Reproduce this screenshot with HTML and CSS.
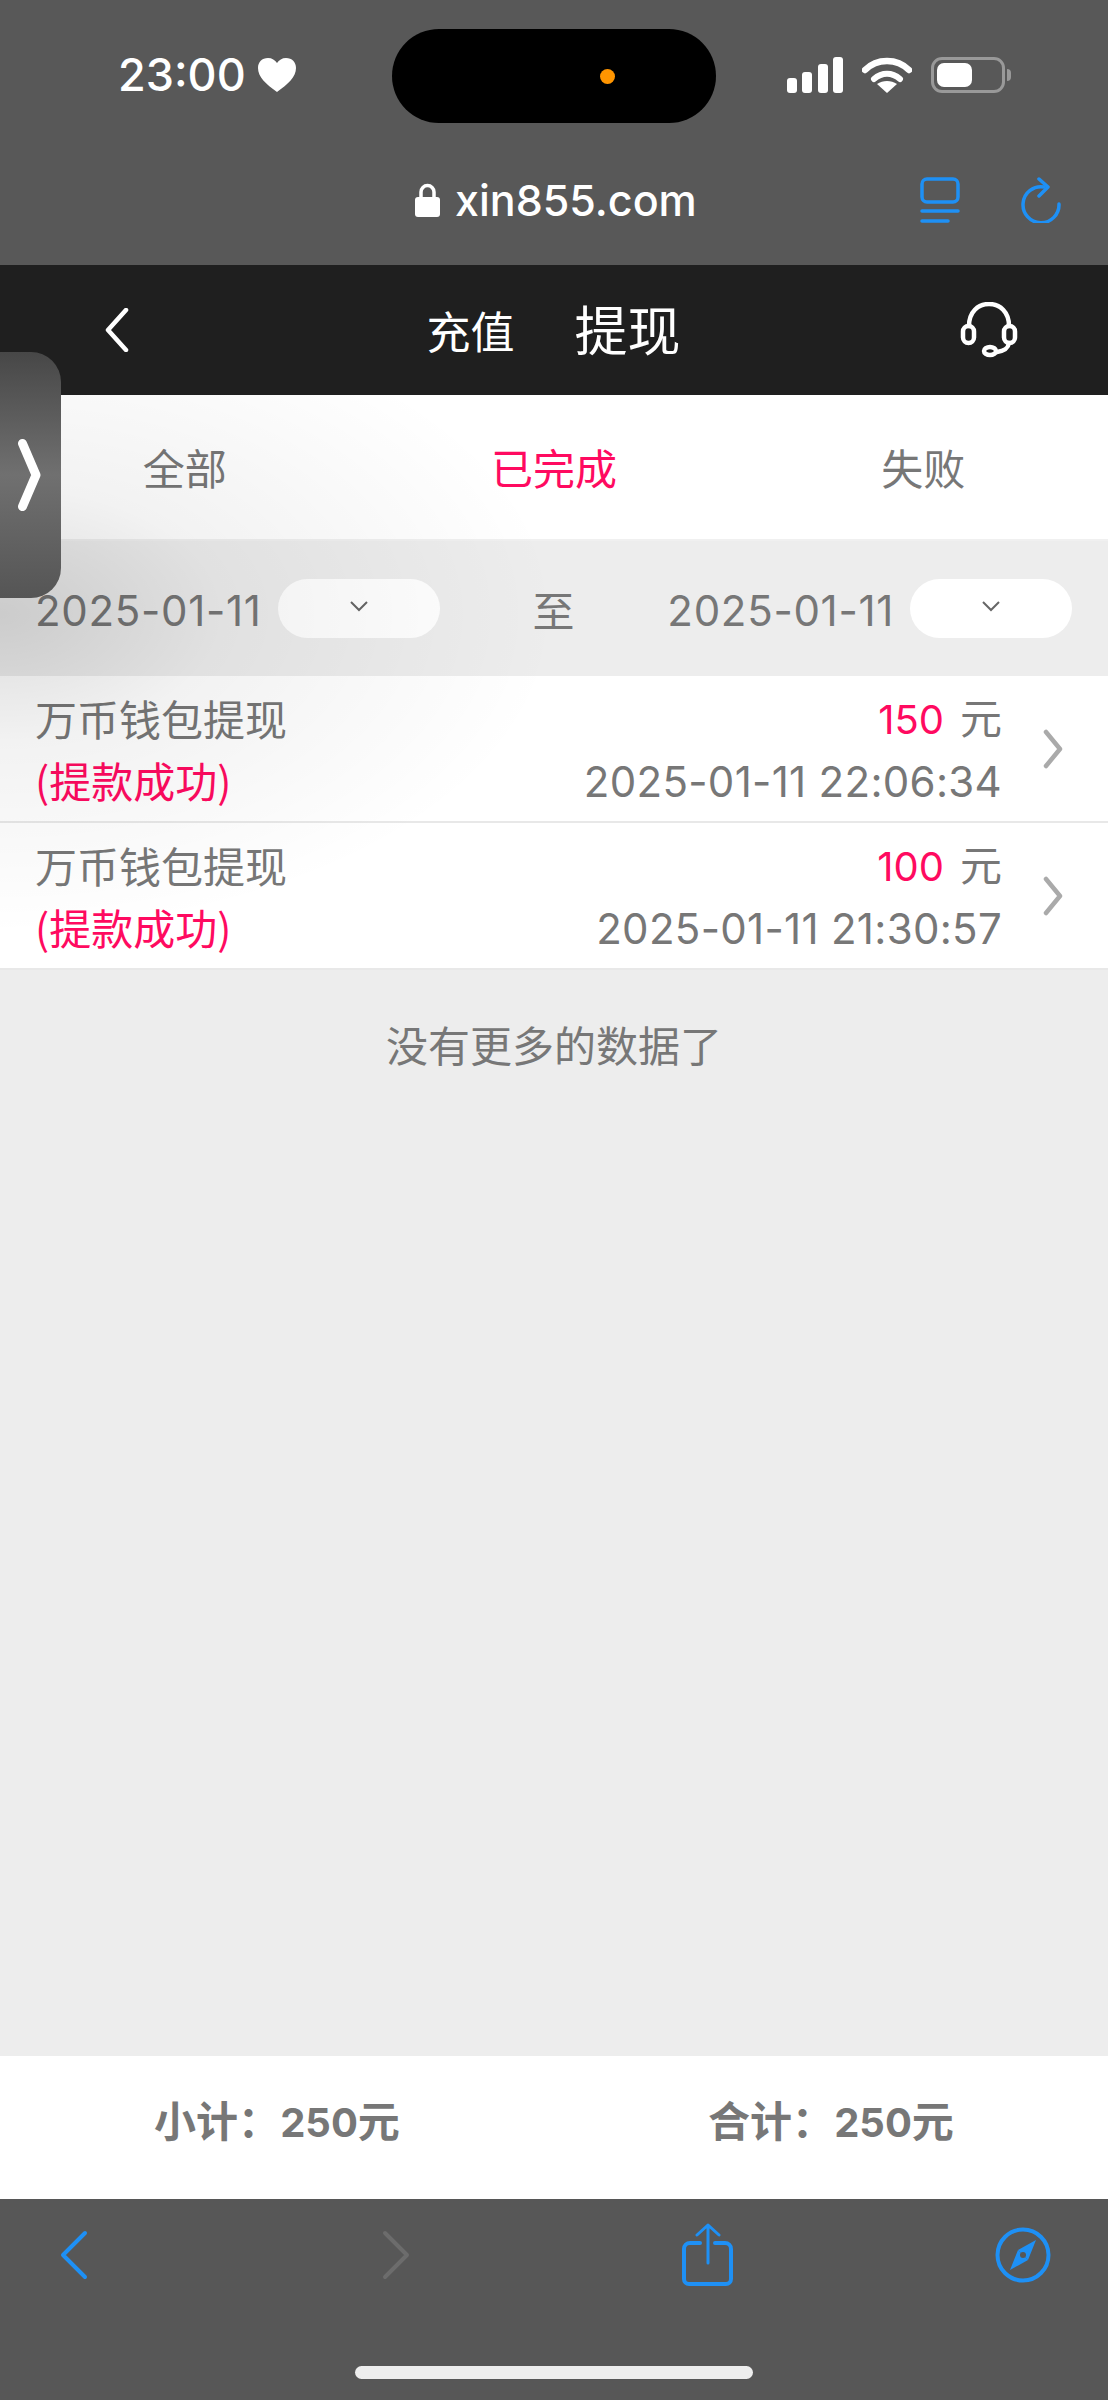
FILE: index.html
```html
<!DOCTYPE html>
<html lang="zh-CN">
<head>
    <meta charset="UTF-8">
    <meta name="viewport" content="width=device-width, initial-scale=1.0">
    <title>提现</title>
    <link rel="stylesheet" href="styles.css">
</head>
<body>
    <div class="page">
        <!-- browser chrome -->
        <div class="chrome-top">
            <div class="status-bar">
                <div class="status-left">
                    <span class="time">23:00</span>
                    <svg class="heart" viewBox="0 0 38 34" width="38" height="34"><path d="M19 34C8 26 0 19 0 10 0 4 4 0 10 0c4 0 7 2 9 5 2-3 5-5 9-5 6 0 10 4 10 10 0 9-8 16-19 24z" fill="#fff"/></svg>
                </div>
                <div class="status-right">
                    <svg viewBox="0 0 56 36" width="56" height="36">
                        <rect x="0" y="21" width="10" height="15" rx="3" fill="#fff"/>
                        <rect x="15" y="15" width="10" height="21" rx="3" fill="#fff"/>
                        <rect x="31" y="7" width="10" height="29" rx="3" fill="#fff"/>
                        <rect x="46" y="0" width="10" height="36" rx="3" fill="#fff"/>
                    </svg>
                    <svg viewBox="0 0 50 36" width="50" height="36">
                        <path d="M3 13C15 1 35 1 47 13" fill="none" stroke="#fff" stroke-width="6.5" stroke-linecap="round"/>
                        <path d="M12 22c8-7 18-7 26 0" fill="none" stroke="#fff" stroke-width="6" stroke-linecap="round"/>
                        <path d="M25 36l-10-9c6-4 14-4 20 0z" fill="#fff"/>
                    </svg>
                    <div class="battery"><div class="battery-level"></div></div>
                </div>
            </div>
            <div class="url-bar">
                <div class="url">
                    <svg viewBox="0 0 25 34" width="25" height="34"><path d="M6 15V9a6.500 6.500 0 0 1 13 0v6" fill="none" stroke="#fff" stroke-width="3.500"/><rect x="0" y="14" width="25" height="20" rx="3" fill="#fff"/></svg>
                    <span>xin855.com</span>
                </div>
                <svg class="tabs-icon" viewBox="0 0 40 46" width="40" height="46" fill="none" stroke="#1e90f5" stroke-width="3.500" stroke-linecap="round">
                    <rect x="2" y="2" width="36" height="23" rx="5"/>
                    <path d="M2 34h36M2 44h26"/>
                </svg>
                <svg class="reload-icon" viewBox="0 0 40 46" width="40" height="46" fill="none" stroke="#1e90f5" stroke-width="3.500" stroke-linecap="round" stroke-linejoin="round">
                    <path d="M23 10A18 18 0 1 0 38 27"/>
                    <path d="M18 2l9 8-9 9"/>
                </svg>
            </div>
        </div>

        <div class="island"><span class="island-dot"></span></div>

        <!-- app header -->
        <div class="nav">
            <svg class="nav-back" viewBox="0 0 24 44" width="24" height="44"><path d="M21 2L3 22l18 20" fill="none" stroke="#fff" stroke-width="4.500" stroke-linecap="round" stroke-linejoin="round"/></svg>
            <div class="nav-title">
                <span class="nav-link">充值</span>
                <span class="nav-current">提现</span>
            </div>
            <svg class="nav-service" viewBox="0 0 58 56" width="58" height="56" fill="none" stroke="#fff" stroke-width="4.500" stroke-linecap="round">
                <path d="M9 24C9 10 18 2 29 2s20 8 20 22"/>
                <rect x="3" y="24" width="11" height="17" rx="5.500"/>
                <rect x="44" y="24" width="11" height="17" rx="5.500"/>
                <path d="M49 41c-1 6-5 8-12 9"/>
                <ellipse cx="30" cy="49" rx="6" ry="4"/>
            </svg>
        </div>

        <div class="tabs">
            <div class="tab">全部</div>
            <div class="tab tab-active">已完成</div>
            <div class="tab">失败</div>
        </div>

        <div class="filter">
            <div class="date-group">
                <span class="date-text">2025-01-11</span>
                <div class="date-pill"><svg viewBox="0 0 20 12" width="20" height="12"><path d="M2 2l8 8 8-8" fill="none" stroke="#666" stroke-width="2"/></svg></div>
            </div>
            <span class="date-to">至</span>
            <div class="date-group">
                <span class="date-text">2025-01-11</span>
                <div class="date-pill"><svg viewBox="0 0 20 12" width="20" height="12"><path d="M2 2l8 8 8-8" fill="none" stroke="#666" stroke-width="2"/></svg></div>
            </div>
        </div>

        <div class="list">
            <div class="row">
                <div class="row-left">
                    <div>万币钱包提现</div>
                    <div class="pink">(提款成功)</div>
                </div>
                <div class="row-right">
                    <div><span class="pink num">150</span><span class="unit">元</span></div>
                    <div class="date-text">2025-01-11 22:06:34</div>
                </div>
                <svg class="row-arrow" viewBox="0 0 20 40" width="20" height="40"><path d="M3 3l14 17L3 37" fill="none" stroke="#aaa" stroke-width="4.500" stroke-linecap="round" stroke-linejoin="round"/></svg>
            </div>
            <div class="row">
                <div class="row-left">
                    <div>万币钱包提现</div>
                    <div class="pink">(提款成功)</div>
                </div>
                <div class="row-right">
                    <div><span class="pink num">100</span><span class="unit">元</span></div>
                    <div class="date-text">2025-01-11 21:30:57</div>
                </div>
                <svg class="row-arrow" viewBox="0 0 20 40" width="20" height="40"><path d="M3 3l14 17L3 37" fill="none" stroke="#aaa" stroke-width="4.500" stroke-linecap="round" stroke-linejoin="round"/></svg>
            </div>
            <div class="no-more">没有更多的数据了</div>
        </div>

        <div class="totals">
            <div>小计：<span class="num">250</span>元</div>
            <div>合计：<span class="num">250</span>元</div>
        </div>

        <div class="toolbar">
            <div class="toolbar-icons">
                <svg viewBox="0 0 60 50" width="60" height="50"><path d="M41 3L19 25l22 22" fill="none" stroke="#1e90f5" stroke-width="4" stroke-linecap="round" stroke-linejoin="round"/></svg>
                <svg viewBox="0 0 60 50" width="60" height="50"><path d="M19 3l22 22-22 22" fill="none" stroke="#6c6c6c" stroke-width="4" stroke-linecap="round" stroke-linejoin="round"/></svg>
                <svg viewBox="0 0 60 64" width="60" height="64" fill="none" stroke="#1e90f5" stroke-linecap="round" stroke-linejoin="round">
                    <path stroke-width="4" d="M22 20H12a6 6 0 0 0-6 6v30a5 5 0 0 0 5 5h37a5 5 0 0 0 5-5V26a6 6 0 0 0-6-6H37"/>
                    <path stroke-width="3" d="M30 40V2M19 12L30 2l11 10"/>
                </svg>
                <svg viewBox="0 0 60 60" width="60" height="60">
                    <circle cx="30" cy="30" r="25.500" fill="none" stroke="#1e90f5" stroke-width="4"/>
                    <path d="M43 15L35 35 25 25z" fill="#1e90f5"/>
                    <path d="M17 45l8-20 10 10z" fill="#1e90f5"/>
                    <circle cx="30" cy="30" r="3" fill="#575757"/>
                </svg>
            </div>
            <div class="home-bar"></div>
        </div>

        <div class="glare"></div>
        <div class="side-handle">
            <svg viewBox="0 0 24 72" width="24" height="72"><path d="M4.500 4.500L18 36 4.500 67.500" fill="none" stroke="#fff" stroke-width="9" stroke-linecap="round" stroke-linejoin="round"/></svg>
        </div>
    </div>
</body>
</html>
```

FILE: styles.css
```css
* {
    box-sizing: border-box;
}
body {
    margin: 0;
    font-family: "Noto Sans CJK SC", "Liberation Sans", sans-serif;
    color: #777;
}
.page {
    position: relative;
    display: flex;
    flex-direction: column;
    width: 1108px;
    height: 2400px;
    overflow: hidden;
    background-color: #ededed;
}
svg {
    display: block;
    flex: none;
}
.num {
    font-family: Inter, "Liberation Sans", sans-serif;
    font-size: 40px;
}
.date-text {
    font-family: Inter, "Liberation Sans", sans-serif;
    font-size: 42px;
    letter-spacing: 0.7px;
    white-space: nowrap;
}
.filter .date-text {
    padding-top: 3px;
}
.row-right .date-text {
    letter-spacing: 0.3px;
}

/* browser chrome */
.chrome-top {
    height: 265px;
    background-color: #585858;
    color: #fff;
    font-family: Inter, sans-serif;
    font-weight: 500;
}
.status-bar {
    display: flex;
    justify-content: space-between;
    align-items: center;
    height: 150px;
    padding: 0 103px 0 118px;
}
.status-left {
    display: flex;
    align-items: center;
    gap: 12px;
}
.time {
    font-size: 45px;
    line-height: 50px;
}
.status-right {
    display: flex;
    align-items: center;
    gap: 19px;
}
.battery {
    position: relative;
    width: 74px;
    height: 36px;
    padding: 3px;
    border: 3px solid #999;
    border-radius: 11px;
}
.battery:after {
    content: "";
    position: absolute;
    left: 73px;
    top: 9px;
    width: 4px;
    height: 12px;
    border-radius: 0 4px 4px 0;
    background-color: #999;
}
.battery-level {
    width: 35px;
    height: 100%;
    border-radius: 7px;
    background-color: #fff;
}
.island {
    position: absolute;
    left: 392px;
    top: 29px;
    display: flex;
    align-items: center;
    justify-content: flex-end;
    width: 324px;
    height: 94px;
    padding-right: 101px;
    border-radius: 47px;
    background-color: #000;
}
.island-dot {
    width: 15px;
    height: 15px;
    border-radius: 50%;
    background-color: #ff9500;
}
.url-bar {
    position: relative;
    display: flex;
    align-items: center;
    height: 100px;
    padding-left: 415px;
}
.url {
    display: flex;
    align-items: center;
    gap: 15px;
    font-size: 43px;
    width: 282px;
}
.tabs-icon {
    margin-left: 223px;
}
.reload-icon {
    margin-left: 61px;
}

/* header */
.nav {
    display: flex;
    align-items: center;
    justify-content: space-between;
    height: 130px;
    padding: 0 90px 0 105px;
    background-color: #1f1f1f;
    color: #fff;
}
.nav-title {
    display: flex;
    align-items: center;
    gap: 60px;
    margin-left: 18px;
}
.nav-link {
    font-size: 44px;
}
.nav-current {
    padding-bottom: 4px;
    font-size: 53px;
}

.tabs {
    display: grid;
    grid-template-columns: repeat(3, 1fr);
    height: 146px;
    background-color: #fff;
    border-bottom: 2px solid #f0f0f0;
    font-size: 42px;
    line-height: 144px;
    text-align: center;
}
.tab-active {
    color: #ff0a60;
}

.filter {
    display: flex;
    align-items: center;
    justify-content: space-between;
    height: 135px;
    padding: 0 36px 0 35px;
    font-size: 42px;
}
.date-group {
    display: flex;
    align-items: center;
    gap: 16px;
}
.date-pill {
    display: flex;
    align-items: center;
    justify-content: center;
    width: 162px;
    height: 59px;
    padding-bottom: 6px;
    border-radius: 30px;
    background-color: #fff;
}

.row {
    display: flex;
    align-items: center;
    height: 147px;
    padding: 0 45px 0 35px;
    background-color: #fff;
    border-bottom: 2px solid #e8e8e8;
    font-size: 42px;
    line-height: 62px;
}
.row-left {
    flex: 1;
}
.row-right {
    text-align: right;
}
.row-arrow {
    margin-left: 41px;
}
.pink {
    color: #ff0a60;
}
.unit {
    margin-left: 16px;
}
.no-more {
    padding-top: 44px;
    font-size: 42px;
    line-height: 60px;
    text-align: center;
}
.list {
    flex: 1;
}

.totals {
    display: grid;
    grid-template-columns: 1fr 1fr;
    height: 143px;
    background-color: #fff;
    font-size: 42px;
    font-weight: 700;
    line-height: 126px;
    text-align: center;
}

.toolbar {
    height: 201px;
    padding-top: 24px;
    background-color: #575757;
}
.toolbar-icons {
    display: grid;
    grid-template-columns: 322px 312px 315px 60px;
    align-items: center;
    height: 64px;
    padding-left: 44px;
}
.home-bar {
    width: 398px;
    height: 13px;
    margin: 79px 0 0 355px;
    border-radius: 7px;
    background-color: #eee;
}

/* floating bits */
.glare {
    position: absolute;
    left: 0;
    top: 394px;
    width: 800px;
    height: 720px;
    background: radial-gradient(ellipse 560px 320px at 0 220px, rgba(0, 0, 0, 0.14), rgba(0, 0, 0, 0.05) 40%, rgba(0, 0, 0, 0));
    pointer-events: none;
}
.side-handle {
    position: absolute;
    left: 0;
    top: 352px;
    display: flex;
    align-items: center;
    width: 61px;
    height: 246px;
    padding-left: 18px;
    border-radius: 0 30px 30px 0;
    background: linear-gradient(#474747, #707070 50%, #555);
}
```
